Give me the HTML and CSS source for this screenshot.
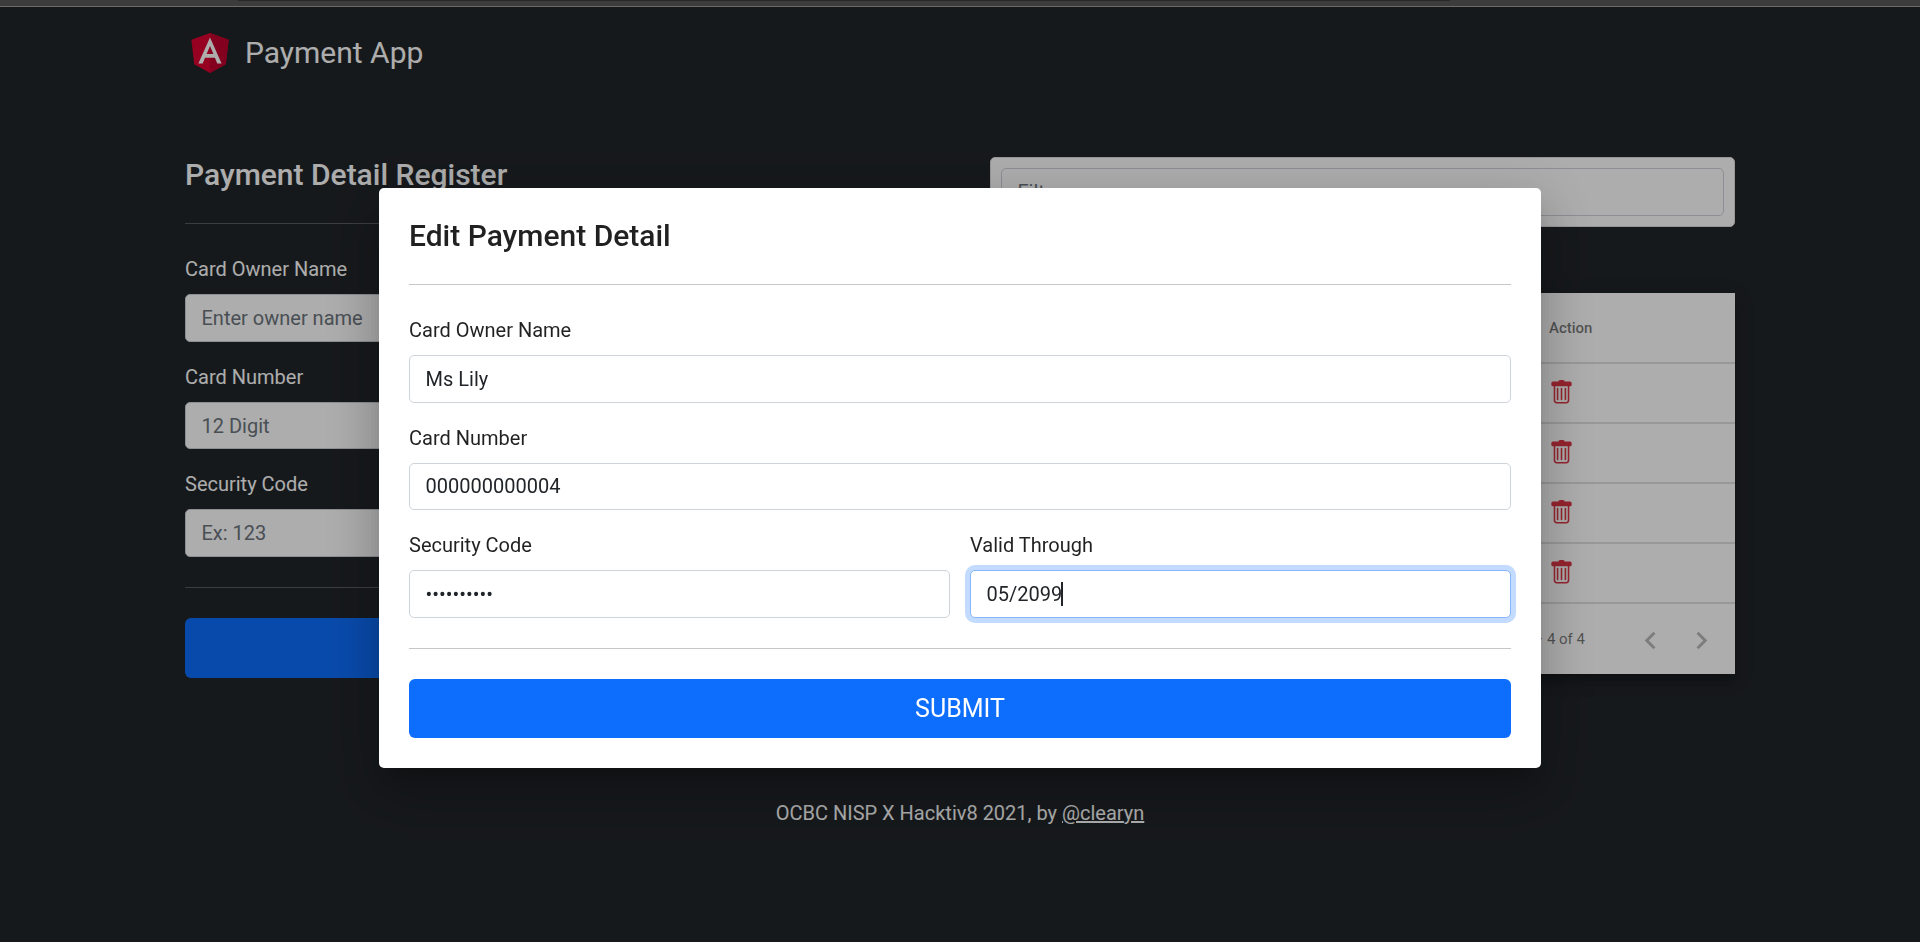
FILE: index.html
```html
<!DOCTYPE html>
<html lang="en">
<head>
<meta charset="utf-8">
<title>Payment App</title>
<link rel="stylesheet" href="styles.css">
</head>
<body>
<svg class="symbols" width="0" height="0">
  <symbol id="trash" viewBox="0 0 16 16"><path d="M2.500 1a1 1 0 0 0-1 1v1a1 1 0 0 0 1 1H3v9a2 2 0 0 0 2 2h6a2 2 0 0 0 2-2V4h.5a1 1 0 0 0 1-1V2a1 1 0 0 0-1-1H10a1 1 0 0 0-1-1H7a1 1 0 0 0-1 1H2.500zm1.500 3h8v9a1 1 0 0 1-1 1H5a1 1 0 0 1-1-1V4zM5.500 5a.5.5 0 0 1 .5.5v7a.5.5 0 0 1-1 0v-7a.5.5 0 0 1 .5-.5zM8 5a.5.5 0 0 1 .5.5v7a.5.5 0 0 1-1 0v-7A.5.5 0 0 1 8 5zm3 .5v7a.5.5 0 0 1-1 0v-7a.5.5 0 0 1 1 0z" fill-rule="evenodd"/></symbol>
</svg>
<div class="page">
  <div class="toolbar-edge"><div class="toolbar-shade"></div></div>
  <header class="navbar">
    <svg class="logo" viewBox="0 0 250 250">
      <path fill="#dd0031" d="M125 30 31.900 63.200l14.200 123.100L125 230l78.900-43.700 14.200-123.100z"/>
      <path fill="#c3002f" d="M125 30v200l78.900-43.700 14.200-123.100z"/>
      <path fill="#fff" d="M125 52.100 66.800 182.600h21.700l11.700-29.200h49.400l11.700 29.200H183L125 52.100zm17 83.300h-34l17-40.900 17 40.900z"/>
    </svg>
    <span class="brand">Payment App</span>
  </header>
  <main class="columns">
    <section class="register">
      <h3 class="title">Payment Detail Register</h3>
      <div class="rule"></div>
      <div class="group"><div class="label">Card Owner Name</div><div class="field placeholder">Enter owner name</div></div>
      <div class="group"><div class="label">Card Number</div><div class="field placeholder low">12 Digit</div></div>
      <div class="group"><div class="label">Security Code</div><div class="field placeholder">Ex: 123</div></div>
      <div class="rule"></div>
      <div class="button"></div>
    </section>
    <section class="list">
      <div class="filter"><div class="field placeholder">Filter</div></div>
      <div class="table">
        <div class="row head">Action</div>
        <div class="row"><svg class="trash"><use href="#trash"/></svg></div>
        <div class="row"><svg class="trash"><use href="#trash"/></svg></div>
        <div class="row"><svg class="trash"><use href="#trash"/></svg></div>
        <div class="row"><svg class="trash"><use href="#trash"/></svg></div>
        <div class="paginator">
          <span class="range">1 – 4 of 4</span>
          <svg class="chevron" viewBox="0 0 24 24"><path d="M15.410 7.410 14 6l-6 6 6 6 1.410-1.410L10.830 12z"/></svg>
          <svg class="chevron" viewBox="0 0 24 24"><path d="M10 6 8.590 7.410 13.170 12l-4.580 4.590L10 18l6-6z"/></svg>
        </div>
      </div>
    </section>
  </main>
  <footer class="footer">OCBC NISP X Hacktiv8 2021, by <a class="author">@clearyn</a></footer>
</div>
<div class="overlay">
  <div class="dialog">
    <h3 class="title dialog-title">Edit Payment Detail</h3>
    <div class="rule"></div>
    <div class="group"><div class="label">Card Owner Name</div><div class="field">Ms Lily</div></div>
    <div class="group"><div class="label">Card Number</div><div class="field">000000000004</div></div>
    <div class="pair">
      <div><div class="label">Security Code</div><div class="field">••••••••••</div></div>
      <div><div class="label">Valid Through</div><div class="field focused">05/2099<span class="caret"></span></div></div>
    </div>
    <div class="rule"></div>
    <div class="button submit">SUBMIT</div>
  </div>
</div>
</body>
</html>
```

FILE: styles.css
```css
* { box-sizing: border-box; }
body { margin: 0; height: 942px; overflow: hidden; background: #212529; color: #fff; font: 400 20px/30px Roboto, sans-serif; }
.symbols { position: absolute; }
.page { height: 942px; background: #212529; }
.toolbar-edge { height: 7px; background: #595959; border-bottom: 1px solid #9c9c9c; }
.toolbar-shade { width: 1212px; height: 1px; margin-left: 238px; background: #3c3c3c; }
.navbar { display: flex; align-items: center; height: 50px; margin-top: 20px; padding-left: 185px; }
.logo { width: 50px; height: 50px; }
.brand { margin: 2px 0 0 10px; font-size: 30px; }
.columns { display: grid; grid-template-columns: 745px 745px; column-gap: 60px; padding: 80px 185px 0; }
.title { margin: 0; font-size: 30px; line-height: 36px; font-weight: 500; }
.register { height: 521px; }
.rule { height: 1px; margin: 30px 0; background: currentColor; opacity: .25; }
.label { margin-bottom: 10px; }
.group { margin-bottom: 20px; }
.field { display: flex; align-items: center; height: 47.5px; padding: 0 15.500px; border: 1px solid #ced4da; border-radius: 5px; background: #fff; color: #212529; }
.placeholder { color: #6c757d; }
.low { padding-top: 1px; }
.button { height: 60px; border-radius: 6px; background: #0d6efd; color: #fff; font-size: 25px; line-height: 60px; text-align: center; }
.submit { height: 59.5px; line-height: 59.5px; }
.filter { height: 70px; padding: 10px; border: 1px solid #dfdfdf; border-radius: 5px; background: #fff; }
.table { margin-top: 66px; background: #fff; color: rgba(0,0,0,.54); font-size: 15px; box-shadow: 0 6px 6px -4px rgba(0,0,0,.2), 0 10px 12px 1px rgba(0,0,0,.14), 0 4px 18px 2px rgba(0,0,0,.12); }
.row { display: flex; align-items: center; height: 60px; padding-left: 559px; border-bottom: 2px solid #e0e0e0; }
.head { height: 71px; font-weight: 500; }
.trash { width: 25px; height: 25px; margin-bottom: 1.5px; fill: #dc3545; }
.paginator { display: flex; align-items: center; justify-content: flex-end; height: 70px; padding-right: 9px; }
.range { margin-right: 40px; }
.chevron { width: 35px; height: 35px; margin: 2px 7.5px 0 8px; fill: rgba(0,0,0,.28); }
.footer { margin-top: 120px; text-align: center; }
.author { text-decoration: underline; }
.overlay { position: fixed; inset: 0; display: flex; justify-content: center; align-items: flex-start; padding-top: 188px; background: rgba(0,0,0,.32); }
.dialog { width: 1162px; height: 580px; padding: 30px; border-radius: 5px; background: #fff; color: rgba(0,0,0,.87); box-shadow: 0 14px 19px -9px rgba(0,0,0,.2), 0 30px 48px 4px rgba(0,0,0,.14), 0 11px 58px 10px rgba(0,0,0,.12); }
.pair { display: grid; grid-template-columns: 1fr 1fr; gap: 20px; }
.focused { border-color: #86b7fe; box-shadow: 0 0 0 5px rgba(13,110,253,.25); }
.caret { width: 2px; height: 24px; margin-left: -1px; background: #212529; }
```
